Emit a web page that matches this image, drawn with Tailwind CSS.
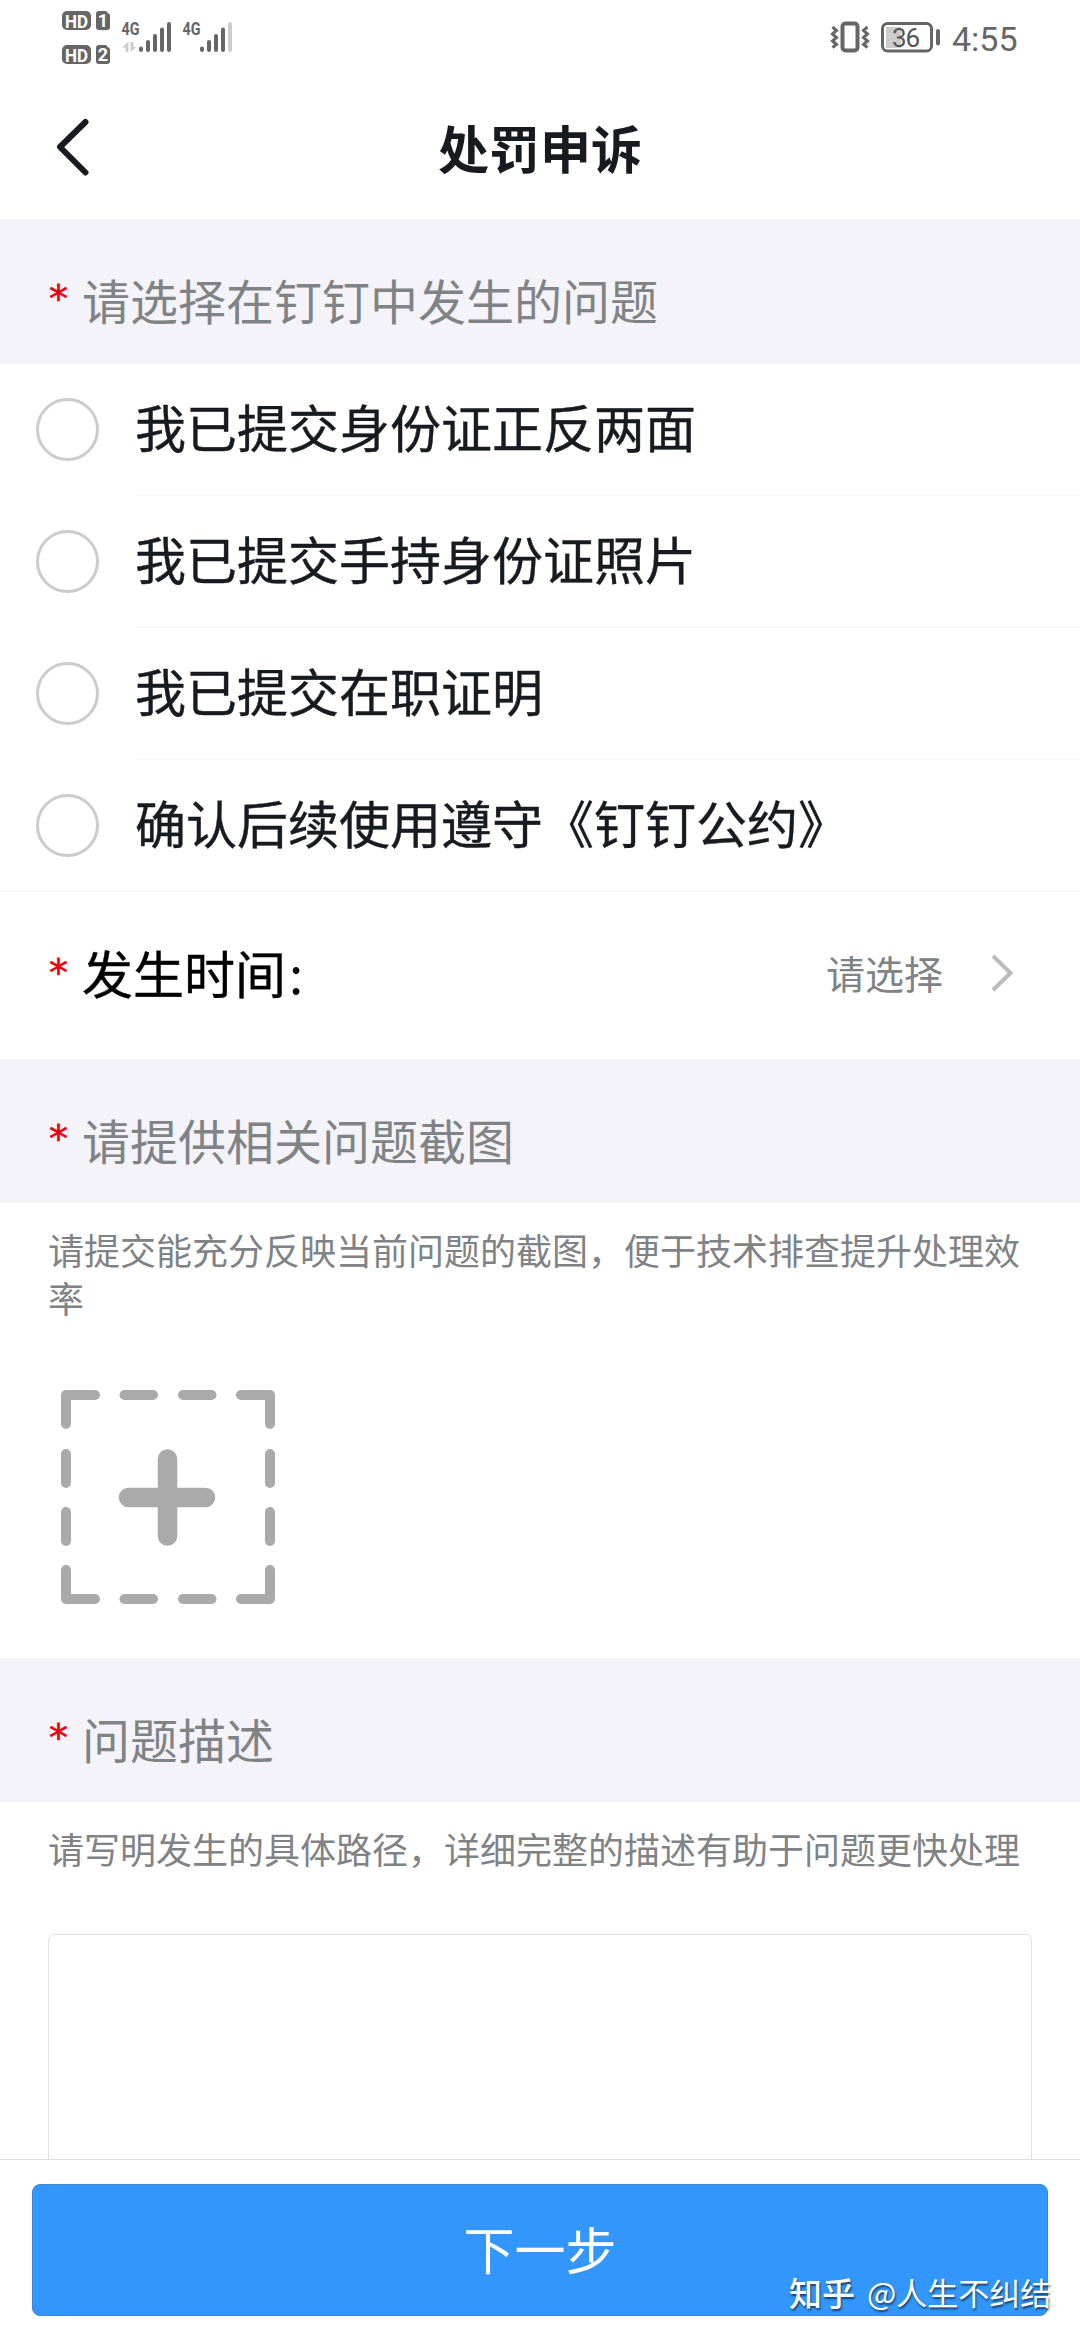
<!DOCTYPE html>
<html lang="zh-CN">
<head>
<meta charset="utf-8">
<title>处罚申诉</title>
<script src="https://cdn.jsdelivr.net/npm/@tailwindcss/browser@4"></script>
</head>
<body class="bg-white">
<div class="relative flex h-[2340px] w-[1080px] flex-col overflow-hidden bg-white font-['Noto_Sans_CJK_SC',sans-serif] text-[#171b20]">

  <!-- status bar -->
  <div class="flex h-20 shrink-0 items-start justify-between pl-[60px] pr-[61px]">
    <svg class="h-20 w-[176px]" viewBox="60 0 176 80" fill="#666">
      <rect x="62" y="11" width="29" height="19" rx="5"/>
      <path d="M99 11h7l4 4v12a3 3 0 0 1-3 3h-8a3 3 0 0 1-3-3V14a3 3 0 0 1 3-3z"/>
      <rect x="62" y="45" width="29" height="19" rx="5"/>
      <path d="M99 45h7l4 4v12a3 3 0 0 1-3 3h-8a3 3 0 0 1-3-3V48a3 3 0 0 1 3-3z"/>
      <g fill="#fff" font-family="Roboto" font-weight="700" font-size="19" text-anchor="middle">
        <text x="76.500" y="27.500" textLength="23" lengthAdjust="spacingAndGlyphs">HD</text>
        <text x="103" y="27" font-size="18">1</text>
        <text x="76.500" y="61.500" textLength="23" lengthAdjust="spacingAndGlyphs">HD</text>
        <text x="103" y="61" font-size="18">2</text>
      </g>
      <g font-family="Roboto" font-weight="700" font-size="19">
        <text x="121.500" y="35" textLength="18" lengthAdjust="spacingAndGlyphs">4G</text>
        <text x="182.500" y="35" textLength="18" lengthAdjust="spacingAndGlyphs">4G</text>
      </g>
      <path d="M128.500 52V41.500l-6.500 6h3.500V52zM130.500 42v10l6-5h-3v-5z" fill="#ccc"/>
      <g stroke="#666" stroke-width="4" stroke-linecap="round">
        <path d="M141 48.500v1.500M148 42v8M155 36v14M162 29.500v20.500M169 24v26"/>
        <path d="M202 48.500v1.500M209 42v8M216 36v14M223 29.500v20.500"/>
        <path d="M230 24v26" stroke="#ccc"/>
      </g>
    </svg>
    <div class="flex h-20 items-start">
      <svg class="h-20 w-[114px]" viewBox="829 0 114 80" fill="none" stroke="#666">
        <path d="M832.500 27l4 3.500-4 3.500 4 3.500-4 3.500 4 3.500-4 3M867.500 27l-4 3.500 4 3.500-4 3.500 4 3.500-4 3.500 4 3" stroke-width="3"/>
        <rect x="842.500" y="23.500" width="15" height="27" rx="3" stroke-width="4"/>
        <rect x="886" y="27" width="15" height="21" fill="#ccc" stroke="none"/>
        <rect x="882.500" y="23.500" width="49" height="27.500" rx="5" stroke-width="3"/>
        <path d="M938 31v12.500" stroke-width="4" stroke-linecap="round"/>
        <text x="906" y="47" text-anchor="middle" font-family="Roboto" font-size="26" textLength="28" fill="#555" stroke="none">36</text>
      </svg>
      <svg class="h-20 w-[76px]" viewBox="943 0 76 80"><text x="952" y="51" font-family="Roboto" font-size="34" textLength="65.500" fill="#666">4:55</text></svg>
    </div>
  </div>

  <!-- navigation -->
  <div class="relative flex h-[139px] shrink-0 items-center justify-center pb-1">
    <svg class="absolute left-[55px] top-[38px] h-[58px] w-[36px]" viewBox="0 0 36 58" fill="none" stroke="#171b20" stroke-width="6" stroke-linecap="round" stroke-linejoin="round"><path d="M30.500 4L5 29l25.500 25.500"/></svg>
    <h1 class="text-[51px] leading-none font-bold">处罚申诉</h1>
  </div>

  <div class="flex h-[145px] shrink-0 items-center bg-[#f4f3f9] pt-3.5 pl-[49px] text-[48px] leading-none text-[#808386]">
    <span class="w-[33px] font-['DejaVu_Sans'] text-[38px] text-[#e60012] [-webkit-text-stroke:0.6px]">*</span><span>请选择在钉钉中发生的问题</span>
  </div>

  <!-- options -->
  <div class="flex shrink-0 flex-col text-[51px] leading-none">
    <label class="flex h-[132px] items-center pl-9"><i class="mr-[36px] mb-0.5 size-[63px] rounded-full border-3 border-[#ccc]"></i><span class="flex h-full flex-1 items-center border-b-2 border-[#f9f9f9] pb-1.5 [-webkit-text-stroke:0.4px]">我已提交身份证正反两面</span></label>
    <label class="flex h-[132px] items-center pl-9"><i class="mr-[36px] mb-0.5 size-[63px] rounded-full border-3 border-[#ccc]"></i><span class="flex h-full flex-1 items-center border-b-2 border-[#f9f9f9] pb-1.5 [-webkit-text-stroke:0.4px]">我已提交手持身份证照片</span></label>
    <label class="flex h-[132px] items-center pl-9"><i class="mr-[36px] mb-0.5 size-[63px] rounded-full border-3 border-[#ccc]"></i><span class="flex h-full flex-1 items-center border-b-2 border-[#f9f9f9] pb-1.5 [-webkit-text-stroke:0.4px]">我已提交在职证明</span></label>
    <label class="flex h-[132px] items-center border-b-2 border-[#f9f9f9] pl-9"><i class="mr-[36px] size-[63px] rounded-full border-3 border-[#ccc]"></i><span class="flex h-full flex-1 items-center pb-1.5 [-webkit-text-stroke:0.4px]">确认后续使用遵守《钉钉公约》</span></label>
  </div>

  <!-- time -->
  <div class="flex h-[167px] shrink-0 items-center pr-[65px] pb-1.5 pl-[49px] text-[51px] leading-none text-black">
    <span class="w-[33px] font-['DejaVu_Sans'] text-[38px] text-[#e60012] [-webkit-text-stroke:0.6px]">*</span><span class="[-webkit-text-stroke:0.4px]">发生时间</span><span class="ml-[3px]">:</span>
    <span class="ml-auto text-[39px] text-[#808386]">请选择</span>
    <svg class="ml-[47px] h-[40px] w-[25px]" viewBox="0 0 25 40" fill="none" stroke="#bbb" stroke-width="4"><path d="M3 3l17.500 17L3 37"/></svg>
  </div>

  <div class="flex h-[144px] shrink-0 items-center bg-[#f4f3f9] pt-4 pl-[49px] text-[48px] leading-none text-[#808386]">
    <span class="w-[33px] font-['DejaVu_Sans'] text-[38px] text-[#e60012] [-webkit-text-stroke:0.6px]">*</span><span>请提供相关问题截图</span>
  </div>
  <div class="flex h-[455px] shrink-0 flex-col pt-[22px] pl-[48px]">
    <p class="w-[980px] text-[36px] leading-[48px] text-[#808386]">请提交能充分反映当前问题的截图，便于技术排查提升处理效率</p>
    <svg class="mt-[69px] ml-[13px] size-[214px]" viewBox="0 0 214 214" fill="none" stroke="#aaa" stroke-width="10" stroke-linecap="round" stroke-linejoin="round">
      <path d="M5 34V5h29M63.500 5h28.500M122 5h28.500M180 5h29v29M209 64v29M209 122v29M209 180v29h-29M150.500 209H122M92 209H63.500M34 209H5v-29M5 151v-29M5 93V64"/>
      <path d="M106.500 69v77M67.500 107.500h77" stroke-width="19.500"/>
    </svg>
  </div>

  <div class="flex h-[144px] shrink-0 items-center bg-[#f4f3f9] pt-4 pl-[49px] text-[48px] leading-none text-[#808386]">
    <span class="w-[33px] font-['DejaVu_Sans'] text-[38px] text-[#e60012] [-webkit-text-stroke:0.6px]">*</span><span>问题描述</span>
  </div>
  <div class="flex h-[357px] shrink-0 flex-col px-[48px] pt-[22px]">
    <p class="text-[36px] leading-[48px] whitespace-nowrap text-[#808386]">请写明发生的具体路径，详细完整的描述有助于问题更快处理</p>
    <div class="mt-[62px] flex-1 rounded-t-md border border-b-0 border-[#e2e2e2]"></div>
  </div>

  <!-- footer -->
  <div class="flex flex-1 flex-col border-t border-[#ddd] px-8 pt-6">
    <div class="flex h-[132px] items-center justify-center rounded-lg border border-[#3b87d6] bg-[#3296fa] pb-1 text-[51px] leading-none text-white">下一步</div>
  </div>
  <div class="absolute top-[2275px] left-[789px] flex items-center text-[31px] leading-[34px] whitespace-nowrap text-white [text-shadow:1px_2px_2px_rgba(0,0,0,0.55)]"><span class="text-[33px] font-medium">知乎</span><span class="ml-[12px]">@人生不纠结</span></div>
</div>
</body>
</html>
